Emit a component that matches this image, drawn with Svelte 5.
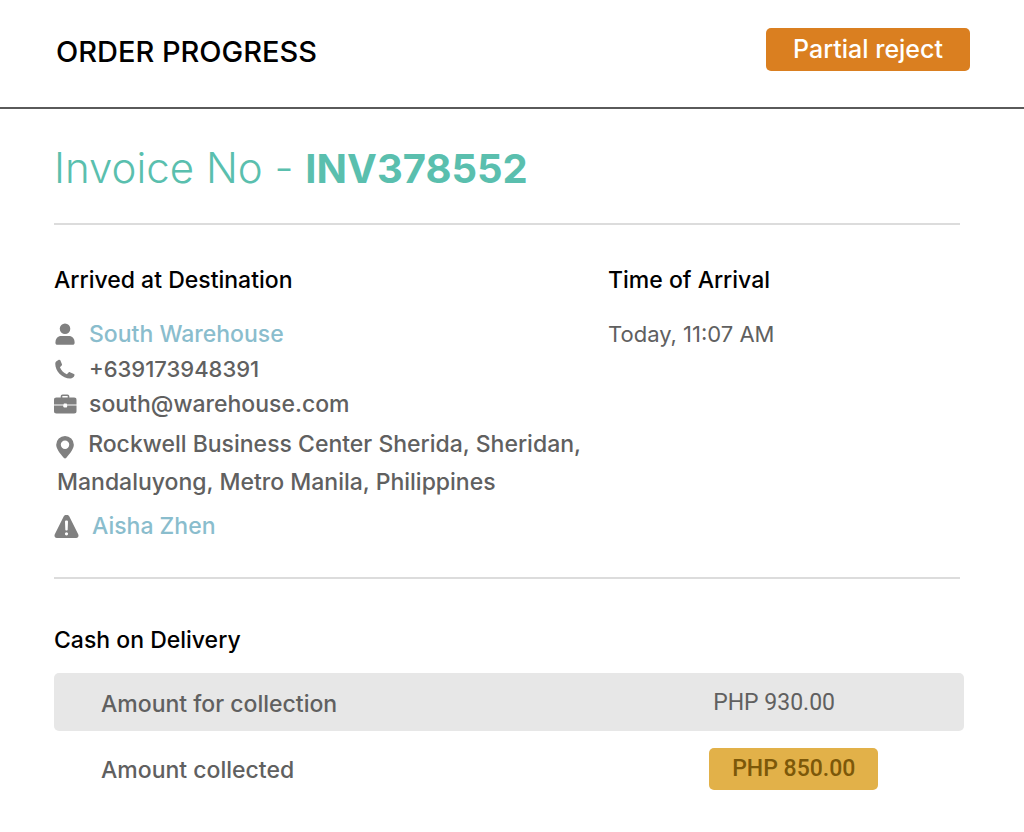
<script>
  const orderStatus = 'Partial reject';
  const invoice = 'INV378552';
</script>

<div class="page">
  <header>
    <h1>ORDER PROGRESS</h1>
    <button type="button" class="status">{orderStatus}</button>
  </header>

  <main>
    <h2>Invoice No - <strong>{invoice}</strong></h2>

    <section class="arrival">
      <div class="destination">
        <h3>Arrived at Destination</h3>
        <div class="row">
          <svg viewBox="0 0 24 24" aria-hidden="true"><circle cx="11.500" cy="6" r="5.500" /><path d="M1.500 20.500c0-4.500 2.500-7 6-7h8c3.500 0 6 2.500 6 7 0 1.500-.8 2.200-2 2.200h-16c-1.200 0-2-.7-2-2.200z" /></svg>
          <a class="name" href="#warehouse">South Warehouse</a>
        </div>
        <div class="row">
          <svg viewBox="0 0 24 24" aria-hidden="true"><path d="M2.200 3.700 5 1.900c.6-.3 1.300-.1 1.600.5l1.700 4c.2.500.1 1-.3 1.400L6.200 9.700c1.400 3.400 3.800 5.800 7.200 7.200l1.800-1.800c.4-.4.900-.5 1.400-.3l4.200 1.800c.6.3.8.9.6 1.500-.7 2.200-2.200 3.300-4.400 3.300C8.600 21.400 1.300 13.700 1.300 6c0-.9.300-1.800.9-2.300z" /></svg>
          <a class="phone" href="tel:+639173948391">+639173948391</a>
        </div>
        <div class="row">
          <svg viewBox="0 0 24 24" aria-hidden="true"><path fill-rule="evenodd" d="M7 4.700V3.500c0-1.200.8-2 2-2h5c1.200 0 2 .8 2 2v1.200h5c1.600 0 2.500.9 2.500 2.500v4.800H0V7.200c0-1.600.9-2.500 2.500-2.500zM8.700 4.700h5.600V3.200H8.700z" /><path d="M0 13h9.800v1c0 .6.400 1 1 1h1.900c.6 0 1-.4 1-1v-1h9.800v6c0 1.600-.9 2.300-2.500 2.300H2.500C.9 21.300 0 20.600 0 19z" /><rect x="10" y="11" width="3.500" height="3.500" rx=".5" fill="#fff" /></svg>
          <a href="mailto:south@warehouse.com">south@warehouse.com</a>
        </div>
        <p class="address">
          <svg viewBox="0 0 24 24" aria-hidden="true"><path fill-rule="evenodd" d="M11.500 0a9.200 9.200 0 0 0-9.200 9.200c0 3.900 3.700 8.900 7.800 13.500.9 1 1.900 1 2.800 0 4.100-4.600 7.800-9.600 7.800-13.500A9.200 9.200 0 0 0 11.500 0zm0 4.700a4.400 4.400 0 1 1 0 8.800 4.400 4.400 0 0 1 0-8.800z" /></svg>
          Rockwell Business Center Sherida, Sheridan, Mandaluyong, Metro Manila, Philippines
        </p>
        <div class="row alert">
          <svg viewBox="0 0 24 24" aria-hidden="true"><path fill-rule="evenodd" d="M9.300 1.200c1.200-1.900 4.200-1.900 5.400 0l9 18c.8 1.700 0 3.800-2 3.800H2.300c-2 0-2.800-2.100-2-3.800zM10.500 6.600l.3 8c0 .7.400 1 1.200 1s1.200-.3 1.200-1l.3-8c0-.8-.6-1.200-1.500-1.200s-1.500.4-1.500 1.200zM12 17.200a1.600 1.600 0 1 0 0 3.200 1.600 1.600 0 0 0 0-3.200z" /></svg>
          <a class="name" href="#contact">Aisha Zhen</a>
        </div>
      </div>
      <div>
        <h3>Time of Arrival</h3>
        <div class="row time">Today, 11:07 AM</div>
      </div>
    </section>

    <section class="cash">
      <h3>Cash on Delivery</h3>
      <table>
        <tbody>
          <tr class="shaded">
            <th scope="row">Amount for collection</th>
            <td><span class="amount">PHP 930.00</span></td>
          </tr>
          <tr>
            <th scope="row">Amount collected</th>
            <td><span class="amount badge">PHP 850.00</span></td>
          </tr>
        </tbody>
      </table>
    </section>
  </main>
</div>

<style>
  :global(body) { margin: 0; background: #fff; }
  .page {
    font-family: Inter, sans-serif;
    font-size: 23px;
    color: #606060;
  }
  h1, h2, h3, p { margin: 0; }
  header {
    display: flex;
    align-items: center;
    justify-content: space-between;
    padding: 28px 54px 36px 56px;
    border-bottom: 2px solid #5a5a5a;
  }
  h1 { font-size: 29px; line-height: 39px; padding-top: 4px; font-weight: 500; color: #000; }
  .status {
    border: 0;
    border-radius: 5px;
    padding: 0 27px;
    font: 500 25px/43px Inter, sans-serif;
    color: #fff;
    background: #da7f20;
  }
  main { padding: 35px 60px 20px 54px; }
  h2 {
    font-size: 42px;
    line-height: 48px;
    font-weight: 300;
    color: #5abfae;
    padding-bottom: 30px;
  }
  h2 strong { font-size: 40px; font-weight: 700; }
  h3 { font-size: 23px; line-height: 32px; font-weight: 500; color: #000; }
  .arrival {
    display: grid;
    grid-template-columns: 554fr 352fr;
    margin-right: 4px;
    padding: 39px 0 33px;
    border-top: 2px solid #dcdcdc;
    border-bottom: 2px solid #dcdcdc;
  }
  .arrival h3 { margin-bottom: 21px; }
  .row { display: flex; align-items: center; gap: 12px; line-height: 35px; font-weight: 500; }
  .phone, .time { font-size: 22px; }
  .time { font-weight: 400; }
  svg { width: 23px; height: 23px; flex: none; fill: #808080; }
  a { color: inherit; text-decoration: none; }
  .name { color: #8abdcd; }
  .address { line-height: 38px; font-weight: 500; padding: 3px 0 0 3px; }
  .address svg { vertical-align: -7px; margin: 0 5px 0 -3px; }
  .alert { padding-top: 8px; gap: 13px; }
  .alert svg { width: 25px; height: 24px; }
  .cash { padding-top: 45px; }
  table {
    width: 100%;
    margin-top: 17px;
    border-collapse: collapse;
    table-layout: fixed;
  }
  th, td { padding: 2px 0 0; text-align: left; font-weight: 500; box-sizing: border-box; }
  th { width: 72%; padding: 4px 0 0 47px; }
  tr { height: 74px; }
  .shaded { height: 58px; }
  .shaded th, .shaded td { background: #e7e7e7; }
  .shaded th { border-radius: 5px 0 0 5px; }
  .shaded td { border-radius: 0 5px 5px 0; }
  .amount { display: inline-block; padding: 0 4px; font: 400 23px/42px Roboto, sans-serif; }
  .badge { padding: 0 23px; border-radius: 5px; font-weight: 500; color: #7c5809; background: #e2b149; }
</style>
